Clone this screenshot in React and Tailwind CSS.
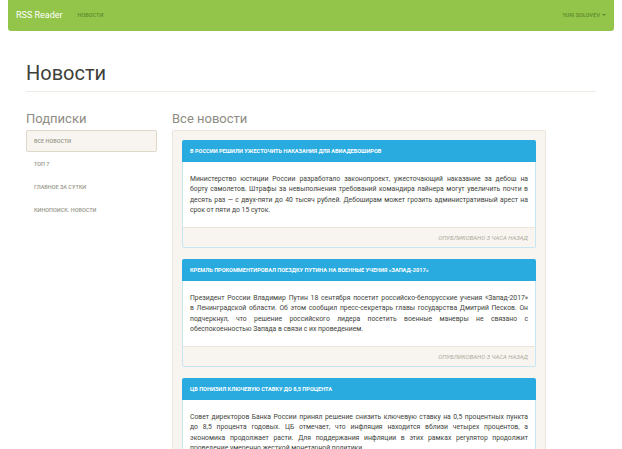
import React from "react";

const subs = ["Все новости", "Топ 7", "Главное за сутки", "Кинопоиск. Новости"];

const news = [
  {
    title: "В России решили ужесточить наказания для авиадебоширов",
    lines: [
      "Министерство юстиции России разработало законопроект, ужесточающий наказание за дебош на",
      "борту самолетов. Штрафы за невыполнения требований командира лайнера могут увеличить почти в",
      "десять раз — с двух-пяти до 40 тысяч рублей. Дебоширам может грозить административный арест на",
      "срок от пяти до 15 суток.",
    ],
  },
  {
    title: "Кремль прокомментировал поездку Путина на военные учения «Запад-2017»",
    lines: [
      "Президент России Владимир Путин 18 сентября посетит российско-белорусские учения «Запад-2017»",
      "в Ленинградской области. Об этом сообщил пресс-секретарь главы государства Дмитрий Песков. Он",
      "подчеркнул, что решение российского лидера посетить военные маневры не связано с",
      "обеспокоенностью Запада в связи с их проведением.",
    ],
  },
  {
    title: "ЦБ понизил ключевую ставку до 8,5 процента",
    lines: [
      "Совет директоров Банка России принял решение снизить ключевую ставку на 0,5 процентных пункта",
      "до 8,5 процента годовых. ЦБ отмечает, что инфляция находится вблизи четырех процентов, а",
      "экономика продолжает расти. Для поддержания инфляции в этих рамках регулятор продолжит",
      "проведение умеренно жесткой монетарной политики.",
    ],
  },
];

const NewsCard = ({ item }) => (
  <div className="mb-[11px] flex flex-col">
    <div className="flex h-[22px] items-center rounded-t-[2px] bg-[#29abe0] px-[8px] text-[5.6px] font-bold uppercase text-white">
      {item.title}
    </div>
    <div className="h-[65px] overflow-hidden border-x border-[#c6e6f3] bg-white px-[7px] pt-[12px] text-[6.8px] leading-[10.4px] text-[#3e3f3a]">
      {item.lines.map((l, i) => (
        <span
          key={i}
          className={i < item.lines.length - 1 ? "block text-justify [text-align-last:justify]" : "block text-left"}
        >
          {l}
        </span>
      ))}
    </div>
    <div className="flex h-[21px] items-center justify-end rounded-b-[2px] border border-t-[#ebe5da] border-x-[#c6e6f3] border-b-[#c6e6f3] bg-[#f8f5f0] px-[7px] text-[6px] italic uppercase text-[#aeaa9d]">
      Опубликовано 3 часа назад
    </div>
  </div>
);

const App = () => {
  return (
    <div className="min-h-screen overflow-hidden bg-white font-['Roboto','Liberation_Sans',sans-serif] text-[#3e3f3a]">
      <nav className="mx-[8px] flex h-[31px] items-center rounded-b-[3px] bg-[#93c54b] px-[8px]">
        <span className="text-[9px] text-white">RSS Reader</span>
        <span className="ml-[15px] text-[5.5px] font-medium uppercase text-[#5f8a2e]">Новости</span>
        <span className="ml-auto flex items-center gap-[2px] text-[5.6px] font-medium uppercase text-[#5f8a2e]">
          Yuri Solovev
          <span className="inline-block h-0 w-0 border-x-[2px] border-t-[2px] border-x-transparent border-t-[#5f8a2e]" />
        </span>
      </nav>

      <div className="px-[26px]">
        <div className="mt-[30px] border-b border-[#eeebe5] pb-[6px]">
          <h1 className="text-[20px] leading-[24px] text-[#3e3f3a]">Новости</h1>
        </div>

        <div className="mt-[19px] flex gap-[15px]">
          <div className="w-[131px] shrink-0">
            <h3 className="text-[13px] leading-[16px] text-[#8e8c84]">Подписки</h3>
            <ul className="mt-[3px] flex flex-col gap-[1px]">
              {subs.map((s, i) => (
                <li
                  key={s}
                  className={
                    i === 0
                      ? "flex h-[22px] items-center rounded-[2px] border border-[#dfd7ca] bg-[#f8f5f0] px-[7px] text-[5.5px] font-medium uppercase text-[#98978b]"
                      : "flex h-[22px] items-center border border-transparent px-[7px] text-[5.5px] font-medium uppercase text-[#98978b]"
                  }
                >
                  {s}
                </li>
              ))}
            </ul>
          </div>

          <div className="w-[374px] shrink-0">
            <h3 className="text-[13px] leading-[16px] text-[#8e8c84]">Все новости</h3>
            <div className="mt-[3px] rounded-[2px] border border-[#ebe6dc] bg-[#f8f5f0] p-[9px]">
              {news.map((n) => (
                <NewsCard key={n.title} item={n} />
              ))}
            </div>
          </div>
        </div>
      </div>
    </div>
  );
};

export default App;
